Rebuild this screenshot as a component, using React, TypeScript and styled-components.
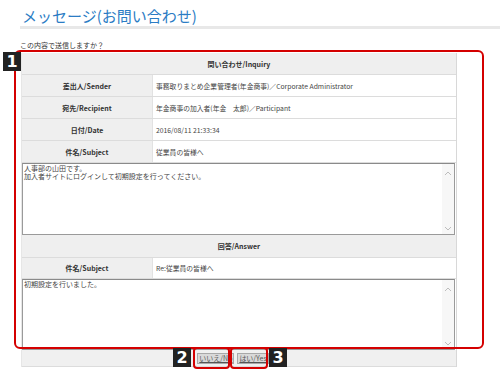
import React from 'react';
import styled, { createGlobalStyle } from 'styled-components';

const GlobalStyle = createGlobalStyle`
  body {
    margin: 0;
    background: #fff;
    font-family: 'Noto Sans CJK JP', 'Noto Sans', sans-serif;
  }
`;

const Page = styled.div`
  position: relative;
  width: 500px;
  height: 375px;
  padding-left: 20px;
  box-sizing: border-box;
  overflow: hidden;
`;

const Title = styled.h1`
  margin: 0;
  padding: 6px 0 0 2px;
  height: 20px;
  font-size: 15px;
  line-height: 20px;
  font-weight: 400;
  color: #2b7cc4;
  border-bottom: 3px solid #e8e8e8;
`;

const Prompt = styled.p`
  margin: 11px 0 0 0;
  font-size: 7px;
  line-height: 10px;
  color: #333;
`;

const Panel = styled.div`
  margin: 3px 0 0 1px;
  width: 436px;
  box-sizing: border-box;
  border-right: 1px solid #d8d8d8;
  border-left: 1px solid #e6e6e6;
  background: #fff;
`;

const SectionHead = styled.div<{ h: number }>`
  height: ${p => p.h}px;
  display: flex;
  align-items: center;
  justify-content: center;
  background: #efefef;
  border-bottom: 1px solid #dcdcdc;
  box-sizing: border-box;
  font-size: 7px;
  font-weight: 700;
  color: #333;
`;

const Row = styled.div<{ h: number }>`
  display: grid;
  grid-template-columns: 131px 1fr;
  height: ${p => p.h}px;
  border-bottom: 1px solid #dcdcdc;
  box-sizing: border-box;
`;

const Label = styled.div`
  display: flex;
  align-items: center;
  justify-content: center;
  background: #efefef;
  border-right: 1px solid #e2e2e2;
  font-size: 7px;
  font-weight: 700;
  color: #333;
`;

const Value = styled.div`
  display: flex;
  align-items: center;
  padding-left: 3px;
  font-size: 6.8px;
  color: #444;
  white-space: nowrap;
`;

const TextBox = styled.div<{ h: number }>`
  display: flex;
  height: ${p => p.h}px;
  box-sizing: border-box;
  border: 1px solid #9a9a9a;
  border-top-color: #8a8a8a;
  margin: 0 1px 0 0;
  background: #fff;
`;

const TextBody = styled.div`
  flex: 1;
  font-size: 7px;
  line-height: 8px;
  color: #444;
  white-space: pre-line;
  padding: 0 1px;
`;

const ScrollTrack = styled.div`
  width: 12px;
  background: #f7f7f7;
  display: flex;
  flex-direction: column;
  justify-content: space-between;
  align-items: center;
  padding: 7px 0 3px;
`;

const Footer = styled.div`
  height: 16px;
  display: flex;
  align-items: center;
  justify-content: center;
  gap: 3px;
  padding-right: 12px;
  background: #f0f0f0;
  border-bottom: 1px solid #dcdcdc;
`;

const SmallButton = styled.button`
  height: 11px;
  padding: 0 1px;
  font-family: inherit;
  font-size: 7px;
  line-height: 9px;
  color: #555;
  background: #d9d9d9;
  border: 1px solid #a8a8a8;
  text-decoration: underline;
  cursor: pointer;
`;

const Frame = styled.div<{ x: number; y: number; w: number; h: number; r: number }>`
  position: absolute;
  left: ${p => p.x}px;
  top: ${p => p.y}px;
  width: ${p => p.w}px;
  height: ${p => p.h}px;
  border: 2px solid #d40000;
  border-radius: ${p => p.r}px;
  box-sizing: border-box;
  pointer-events: none;
`;

const Badge = styled.div<{ x: number; y: number }>`
  position: absolute;
  left: ${p => p.x}px;
  top: ${p => p.y}px;
  width: 18px;
  height: 19px;
  background: #222;
  color: #fff;
  font-family: 'DejaVu Sans', sans-serif;
  font-weight: 700;
  font-size: 16px;
  line-height: 19px;
  text-align: center;
`;

const Chevron: React.FC<{ up?: boolean }> = ({ up }) => (
  <svg width="8" height="5" viewBox="0 0 8 5">
    <path d={up ? 'M1 4 L4 1 L7 4' : 'M1 1 L4 4 L7 1'} fill="none" stroke="#bdbdbd" strokeWidth="1" />
  </svg>
);

const MessageBox: React.FC<{ h: number; text: string }> = ({ h, text }) => (
  <TextBox h={h}>
    <TextBody>{text}</TextBody>
    <ScrollTrack>
      <Chevron up />
      <Chevron />
    </ScrollTrack>
  </TextBox>
);

const inquiryRows = [
  { label: '差出人/Sender', value: '事務取りまとめ企業管理者(年金商事)／Corporate Administrator' },
  { label: '宛先/Recipient', value: '年金商事の加入者(年金　太郎)／Participant' },
  { label: '日付/Date', value: '2016/08/11 21:33:34' },
  { label: '件名/Subject', value: '従業員の皆様へ' },
];

const App: React.FC = () => (
  <Page>
    <GlobalStyle />
    <Title>メッセージ(お問い合わせ)</Title>
    <Prompt>この内容で送信しますか？</Prompt>
    <Panel>
      <SectionHead h={22}>問い合わせ/Inquiry</SectionHead>
      {inquiryRows.map(r => (
        <Row h={22} key={r.label}>
          <Label>{r.label}</Label>
          <Value>{r.value}</Value>
        </Row>
      ))}
      <MessageBox h={72} text={'人事部の山田です。\n加入者サイトにログインして初期設定を行ってください。'} />
      <SectionHead h={23}>回答/Answer</SectionHead>
      <Row h={21}>
        <Label>件名/Subject</Label>
        <Value>Re:従業員の皆様へ</Value>
      </Row>
      <MessageBox h={71} text="初期設定を行いました。" />
      <Footer>
        <SmallButton>いいえ/No</SmallButton>
        <SmallButton>はい/Yes</SmallButton>
      </Footer>
    </Panel>

    <Frame x={14} y={50} w={470} h={299} r={6} />
    <Frame x={193} y={347} w={37} h={22} r={4} />
    <Frame x={230} y={347} w={38} h={22} r={4} />
    <Badge x={3} y={52}>1</Badge>
    <Badge x={173} y={348}>2</Badge>
    <Badge x={269} y={348}>3</Badge>
  </Page>
);

export default App;
